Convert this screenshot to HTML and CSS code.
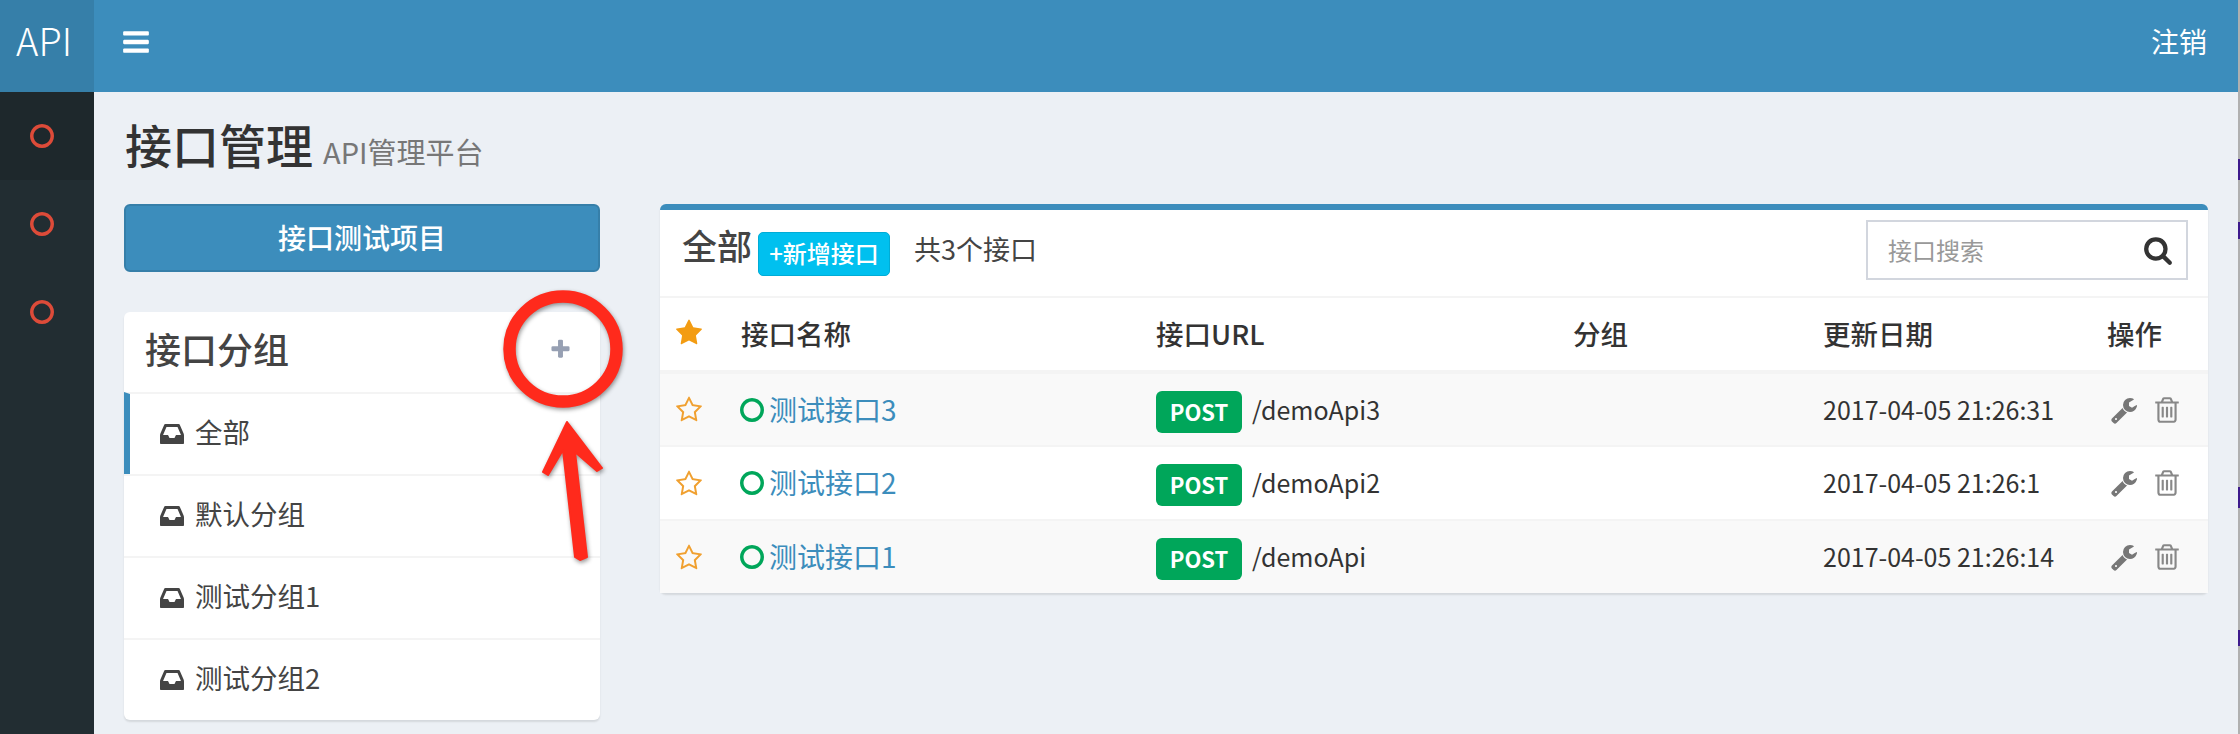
FILE: index.html
```html
<!DOCTYPE html>
<html lang="zh-CN">
<head>
    <meta charset="UTF-8">
    <title>接口管理</title>
    <link rel="stylesheet" href="styles.css">
</head>
<body>
    <!-- font awesome 4 shapes -->
    <svg class="defs" width="0" height="0">
        <symbol id="i-bars" viewBox="0 0 1792 1792"><path d="M1664 1344v128q0 26-19 45t-45 19h-1408q-26 0-45-19t-19-45v-128q0-26 19-45t45-19h1408q26 0 45 19t19 45zm0-512v128q0 26-19 45t-45 19h-1408q-26 0-45-19t-19-45v-128q0-26 19-45t45-19h1408q26 0 45 19t19 45zm0-512v128q0 26-19 45t-45 19h-1408q-26 0-45-19t-19-45v-128q0-26 19-45t45-19h1408q26 0 45 19t19 45z"/></symbol>
        <symbol id="i-circle" viewBox="0 0 1792 1792"><path d="M896 352q-148 0-273 73t-198 198-73 273 73 273 198 198 273 73 273-73 198-198 73-273-73-273-198-198-273-73zm768 544q0 209-103 385.5t-279.5 279.5-385.5 103-385.5-103-279.5-279.5-103-385.5 103-385.5 279.5-279.5 385.5-103 385.5 103 279.5 279.5 103 385.5z"/></symbol>
        <symbol id="i-plus" viewBox="0 0 1792 1792"><path d="M1600 736v192q0 40-28 68t-68 28h-416v416q0 40-28 68t-68 28h-192q-40 0-68-28t-28-68v-416h-416q-40 0-68-28t-28-68v-192q0-40 28-68t68-28h416v-416q0-40 28-68t68-28h192q40 0 68 28t28 68v416h416q40 0 68 28t28 68z"/></symbol>
        <symbol id="i-inbox" viewBox="0 0 1792 1792"><path d="M1151 960h316q-1-3-2.5-8t-2.5-8l-212-496h-708l-212 496q-1 2-2.5 8t-2.5 8h316l95 192h320zm513 30v482q0 26-19 45t-45 19h-1408q-26 0-45-19t-19-45v-482q0-62 25-123l238-552q10-25 36.5-42t52.5-17h832q26 0 52.5 17t36.5 42l238 552q25 61 25 123z"/></symbol>
        <symbol id="i-search" viewBox="0 0 1792 1792"><path d="M1216 832q0-185-131.5-316.5t-316.5-131.5-316.5 131.5-131.5 316.5 131.5 316.5 316.5 131.5 316.5-131.5 131.5-316.5zm512 832q0 52-38 90t-90 38q-54 0-90-38l-343-342q-179 124-399 124-143 0-273.5-55.5t-225-150-150-225-55.5-273.5 55.5-273.5 150-225 225-150 273.5-55.5 273.5 55.5 225 150 150 225 55.5 273.5q0 220-124 399l343 343q37 37 37 90z"/></symbol>
        <symbol id="i-star" viewBox="0 0 1792 1792"><path d="M1728 647q0 22-26 48l-363 354 86 500q1 7 1 20 0 21-10.5 35.5t-30.5 14.5q-19 0-40-12l-449-236-449 236q-22 12-40 12-21 0-31.5-14.5t-10.5-35.5q0-6 2-20l86-500-364-354q-25-27-25-48 0-37 56-46l502-73 225-455q19-41 49-41t49 41l225 455 502 73q56 9 56 46z"/></symbol>
        <symbol id="i-star-o" viewBox="0 0 1792 1792"><path d="M1201 1004l306-297-422-62-189-382-189 382-422 62 306 297-73 421 378-199 377 199zm527-357q0 22-26 48l-363 354 86 500q1 7 1 20 0 50-41 50-19 0-40-12l-449-236-449 236q-22 12-40 12-21 0-31.5-14.5t-10.5-35.5q0-6 2-20l86-500-364-354q-25-27-25-48 0-37 56-46l502-73 225-455q19-41 49-41t49 41l225 455 502 73q56 9 56 46z"/></symbol>
        <symbol id="i-wrench" viewBox="0 0 1792 1792"><path d="M448 1472q0-26-19-45t-45-19-45 19-19 45 19 45 45 19 45-19 19-45zm644-420l-682 682q-37 37-90 37-52 0-91-37l-106-108q-38-36-38-90 0-53 38-91l681-681q39 98 114.5 173.5t173.5 114.5zm634-435q0 39-23 106-47 134-164.5 217.5t-258.5 83.5q-185 0-316.5-131.5t-131.5-316.5 131.5-316.5 316.5-131.5q58 0 121.5 16.5t107.5 46.5q16 11 16 28t-16 28l-293 169v224l193 107q5-3 79-48.5t135.5-81 70.5-35.5q15 0 23.5 10t8.5 25z"/></symbol>
        <symbol id="i-trash" viewBox="0 0 1792 1792"><path d="M704 736v576q0 14-9 23t-23 9h-64q-14 0-23-9t-9-23v-576q0-14 9-23t23-9h64q14 0 23 9t9 23zm256 0v576q0 14-9 23t-23 9h-64q-14 0-23-9t-9-23v-576q0-14 9-23t23-9h64q14 0 23 9t9 23zm256 0v576q0 14-9 23t-23 9h-64q-14 0-23-9t-9-23v-576q0-14 9-23t23-9h64q14 0 23 9t9 23zm128 724v-948h-896v948q0 22 7 40.5t14.5 27 10.5 8.5h832q3 0 10.5-8.5t14.5-27 7-40.5zm-672-1076h448l-48-117q-7-9-17-11h-317q-10 2-17 11zm928 32v64q0 14-9 23t-23 9h-96v948q0 83-47 143.5t-113 60.5h-832q-66 0-113-58.5t-47-141.5v-952h-96q-14 0-23-9t-9-23v-64q0-14 9-23t23-9h309l70-167q15-37 54-63t79-26h320q40 0 79 26t54 63l70 167h309q14 0 23 9t9 23z"/></symbol>
    </svg>

    <!-- Top bar -->
    <header class="topbar">
        <a class="logo">API</a>
        <svg class="icon bars"><use href="#i-bars"/></svg>
        <a class="logout">注销</a>
    </header>

    <div class="layout">
        <!-- Sidebar -->
        <nav class="sidebar">
            <div class="side-item active"><svg class="icon"><use href="#i-circle"/></svg></div>
            <div class="side-item"><svg class="icon"><use href="#i-circle"/></svg></div>
            <div class="side-item"><svg class="icon"><use href="#i-circle"/></svg></div>
        </nav>

        <main class="content">
            <div class="page-title">
                <h1>接口管理</h1>
                <small>API管理平台</small>
            </div>

            <div class="columns">
                <div class="left-col">
                    <button class="project-btn" type="button">接口测试项目</button>
                    <div class="group-box">
                        <div class="group-head">
                            <h3>接口分组</h3>
                            <svg class="icon plus"><use href="#i-plus"/></svg>
                        </div>
                        <div class="group-row active"><svg class="icon"><use href="#i-inbox"/></svg><span>全部</span></div>
                        <div class="group-row"><svg class="icon"><use href="#i-inbox"/></svg><span>默认分组</span></div>
                        <div class="group-row"><svg class="icon"><use href="#i-inbox"/></svg><span>测试分组1</span></div>
                        <div class="group-row"><svg class="icon"><use href="#i-inbox"/></svg><span>测试分组2</span></div>
                    </div>
                </div>

                <div class="api-box">
                    <div class="api-head">
                        <h3>全部</h3>
                        <button class="add-btn" type="button">+新增接口</button>
                        <span class="count">共3个接口</span>
                        <div class="search">
                            <input type="text" placeholder="接口搜索">
                            <svg class="icon"><use href="#i-search"/></svg>
                        </div>
                    </div>
                    <table class="api-table">
                        <colgroup>
                            <col class="c-star"><col class="c-name"><col class="c-url"><col class="c-group"><col class="c-date"><col class="c-op">
                        </colgroup>
                        <thead>
                            <tr>
                                <th><svg class="icon star"><use href="#i-star"/></svg></th>
                                <th>接口名称</th>
                                <th>接口URL</th>
                                <th>分组</th>
                                <th>更新日期</th>
                                <th>操作</th>
                            </tr>
                        </thead>
                        <tbody>
                            <tr>
                                <td><svg class="icon star"><use href="#i-star-o"/></svg></td>
                                <td><div class="cell"><svg class="icon ring"><use href="#i-circle"/></svg><a class="api-link">测试接口3</a></div></td>
                                <td><div class="cell"><span class="badge">POST</span><span class="url">/demoApi3</span></div></td>
                                <td></td>
                                <td><span class="date">2017-04-05 21:26:31</span></td>
                                <td><div class="cell"><svg class="icon op"><use href="#i-wrench"/></svg><svg class="icon op trash"><use href="#i-trash"/></svg></div></td>
                            </tr>
                            <tr>
                                <td><svg class="icon star"><use href="#i-star-o"/></svg></td>
                                <td><div class="cell"><svg class="icon ring"><use href="#i-circle"/></svg><a class="api-link">测试接口2</a></div></td>
                                <td><div class="cell"><span class="badge">POST</span><span class="url">/demoApi2</span></div></td>
                                <td></td>
                                <td><span class="date">2017-04-05 21:26:1</span></td>
                                <td><div class="cell"><svg class="icon op"><use href="#i-wrench"/></svg><svg class="icon op trash"><use href="#i-trash"/></svg></div></td>
                            </tr>
                            <tr>
                                <td><svg class="icon star"><use href="#i-star-o"/></svg></td>
                                <td><div class="cell"><svg class="icon ring"><use href="#i-circle"/></svg><a class="api-link">测试接口1</a></div></td>
                                <td><div class="cell"><span class="badge">POST</span><span class="url">/demoApi</span></div></td>
                                <td></td>
                                <td><span class="date">2017-04-05 21:26:14</span></td>
                                <td><div class="cell"><svg class="icon op"><use href="#i-wrench"/></svg><svg class="icon op trash"><use href="#i-trash"/></svg></div></td>
                            </tr>
                        </tbody>
                    </table>
                </div>
            </div>
        </main>
    </div>

    <!-- red marker drawn over the screenshot -->
    <svg class="marker" width="2240" height="734">
        <ellipse cx="563" cy="349" rx="53.5" ry="52.5"/>
        <polygon points="567,422 602,468 597,471 575,452 587,557 580,560 575,557 563,450 548,475 543,472"/>
    </svg>

    <!-- window edge with its stray marks -->
    <div class="edge"></div>
</body>
</html>
```

FILE: styles.css
```css
* {
    box-sizing: border-box;
}
html, body {
    margin: 0;
    height: 100%;
}
body {
    position: relative;
    overflow: hidden;
    background-color: #ecf0f5;
    color: #444;
    font-family: "Noto Sans CJK SC", "Noto Sans", sans-serif;
    font-size: 28px;
}
.defs {
    position: absolute;
}
.icon {
    display: block;
    width: 28px;
    height: 28px;
    fill: currentColor;
    flex: none;
}

/* top bar */
.topbar {
    display: flex;
    align-items: center;
    height: 92px;
    background-color: #3c8dbc;
    color: white;
}
.logo {
    width: 94px;
    height: 92px;
    padding-right: 6px;
    line-height: 80px;
    text-align: center;
    background-color: #367fa9;
    font-size: 38px;
    font-weight: 300;
}
.bars {
    width: 30px;
    height: 30px;
    margin-left: 27px;
    margin-bottom: 8px;
}
.logout {
    margin-left: auto;
    margin-right: 33px;
    margin-bottom: 10px;
}

/* main layout */
.layout {
    display: flex;
    height: 642px;
}
.sidebar {
    width: 94px;
    flex: none;
    background-color: #222d32;
    color: #dd4b39;
}
.side-item {
    display: flex;
    align-items: center;
    justify-content: center;
    width: 84px;
    height: 88px;
}
.side-item.active {
    width: 94px;
    padding-right: 10px;
    background-color: #1e282c;
}
.content {
    flex: 1;
    padding: 0 32px 0 30px;
}
.page-title {
    display: flex;
    align-items: baseline;
    height: 112px;
    padding-top: 19px;
    color: #333;
}
.page-title h1 {
    margin: 0 10px 0 1px;
    font-size: 47px;
    font-weight: 500;
    line-height: 66px;
}
.page-title small {
    font-size: 29px;
    color: #777;
}
.columns {
    display: flex;
    gap: 60px;
    align-items: flex-start;
}

/* left column */
.left-col {
    width: 476px;
    flex: none;
}
.project-btn {
    display: block;
    width: 100%;
    height: 68px;
    margin-bottom: 40px;
    padding: 0 0 2px;
    background-color: #3c8dbc;
    color: white;
    border: 2px solid #367fa9;
    border-radius: 6px;
    font-family: inherit;
    font-size: 28px;
    font-weight: 500;
}
.group-box {
    background: white;
    border-radius: 6px;
    box-shadow: 0 2px 2px rgba(0, 0, 0, 0.1);
}
.group-head {
    display: flex;
    align-items: center;
    justify-content: space-between;
    height: 80px;
    padding: 0 28px 0 21px;
}
.group-head h3 {
    margin: 0 0 8px;
    font-size: 36px;
    font-weight: 500;
}
.plus {
    width: 23px;
    height: 23px;
    margin-bottom: 6px;
    color: #97a0b3;
}
.group-row {
    display: flex;
    align-items: center;
    gap: 9px;
    height: 82px;
    padding-left: 34px;
    border-top: 2px solid #f4f4f4;
    font-size: 27.5px;
}
.group-row.active {
    padding-left: 28px;
    border-left: 6px solid #3c8dbc;
}
.group-row span {
    margin-bottom: 6px;
}

/* api list */
.api-box {
    width: 1548px;
    flex: none;
    background: white;
    border-top: 6px solid #3c8dbc;
    border-radius: 6px;
    box-shadow: 0 2px 2px rgba(0, 0, 0, 0.1);
}
.api-head {
    display: flex;
    align-items: center;
    height: 88px;
    padding: 0 20px 0 22px;
    border-bottom: 2px solid #f4f4f4;
}
.api-head h3 {
    margin: 0 6px 18px 0;
    font-size: 35px;
    font-weight: 500;
}
.add-btn {
    width: 132px;
    height: 44px;
    margin-top: 2px;
    padding: 0 0 4px;
    background-color: #00c0ef;
    color: white;
    border: 1px solid #00acd6;
    border-radius: 5px;
    font-family: inherit;
    font-size: 24px;
    font-weight: 500;
}
.count {
    margin: 0 0 10px 24px;
    font-size: 27px;
}
.search {
    display: flex;
    align-items: center;
    width: 322px;
    height: 60px;
    margin-left: auto;
    margin-bottom: 6px;
    padding-right: 13px;
    border: 2px solid #d2d6de;
}
.search input {
    flex: 1;
    min-width: 0;
    padding: 0 0 2px 20px;
    border: none;
    outline: none;
    background: none;
    font-family: inherit;
    font-size: 24px;
}
.search input::placeholder {
    color: #999;
}
.search .icon {
    width: 30px;
    height: 30px;
    color: #333;
}
.api-table {
    width: 100%;
    table-layout: fixed;
    border-collapse: collapse;
}
.c-star { width: 65px; }
.c-name { width: 415px; }
.c-url { width: 417px; }
.c-group { width: 250px; }
.c-date { width: 284px; }
.c-op { width: 117px; }
.api-table th {
    height: 74px;
    padding: 0 16px 2px;
    text-align: left;
    font-size: 27.5px;
    font-weight: 500;
    color: #333;
    border-bottom: 4px solid #f4f4f4;
}
.api-table td {
    height: 74px;
    padding: 0 16px;
    font-size: 25px;
    color: #333;
    border-bottom: 2px solid #f4f4f4;
    white-space: nowrap;
}
.api-table tbody tr:last-child td {
    border-bottom: none;
    height: 73px;
}
.api-table tbody tr:nth-child(odd) {
    background-color: #f9f9f9;
}
.cell {
    display: flex;
    align-items: center;
}
.star {
    width: 28px;
    height: 28px;
    margin-left: -1px;
    color: #f39c12;
}
td .star {
    margin-bottom: -1px;
    color: #f0a030;
}
.ring {
    margin: 0 3px 0 -3px;
    color: #00a65a;
}
.api-link {
    margin-bottom: 2px;
    font-size: 28px;
    color: #3c8dbc;
}
.badge {
    width: 86px;
    height: 42px;
    margin-right: 10px;
    margin-top: 4px;
    line-height: 40px;
    text-align: center;
    background-color: #00a65a;
    color: white;
    border-radius: 6px;
    font-size: 22px;
    font-weight: 700;
}
.url {
    margin-bottom: 2px;
}
.date {
    position: relative;
    top: -1px;
}
.op {
    margin-left: 3px;
    color: #777;
}
.trash {
    width: 30px;
    height: 30px;
    margin-left: 14px;
    color: #888;
}

/* annotation */
.marker {
    position: absolute;
    top: 0;
    left: 0;
    pointer-events: none;
    filter: drop-shadow(1px 2px 2px rgba(0, 0, 0, 0.4));
}
.marker ellipse {
    fill: none;
    stroke: #ff2a1c;
    stroke-width: 12.5;
}
.marker polygon {
    fill: #ff2a1c;
    stroke: #ff2a1c;
    stroke-width: 2;
    stroke-linejoin: round;
}
.edge {
    position: absolute;
    top: 0;
    right: 0;
    bottom: 0;
    width: 2px;
    background: linear-gradient(to bottom,
        #b0b0b0 159px, #3d1a8c 159px, #3d1a8c 180px,
        #b0b0b0 180px, #b0b0b0 222px, #3d1a8c 222px, #3d1a8c 239px,
        #b0b0b0 239px, #b0b0b0 487px, #3d1a8c 487px, #3d1a8c 508px,
        #b0b0b0 508px, #b0b0b0 630px, #3d1a8c 630px, #3d1a8c 646px,
        #b0b0b0 646px);
}
```
